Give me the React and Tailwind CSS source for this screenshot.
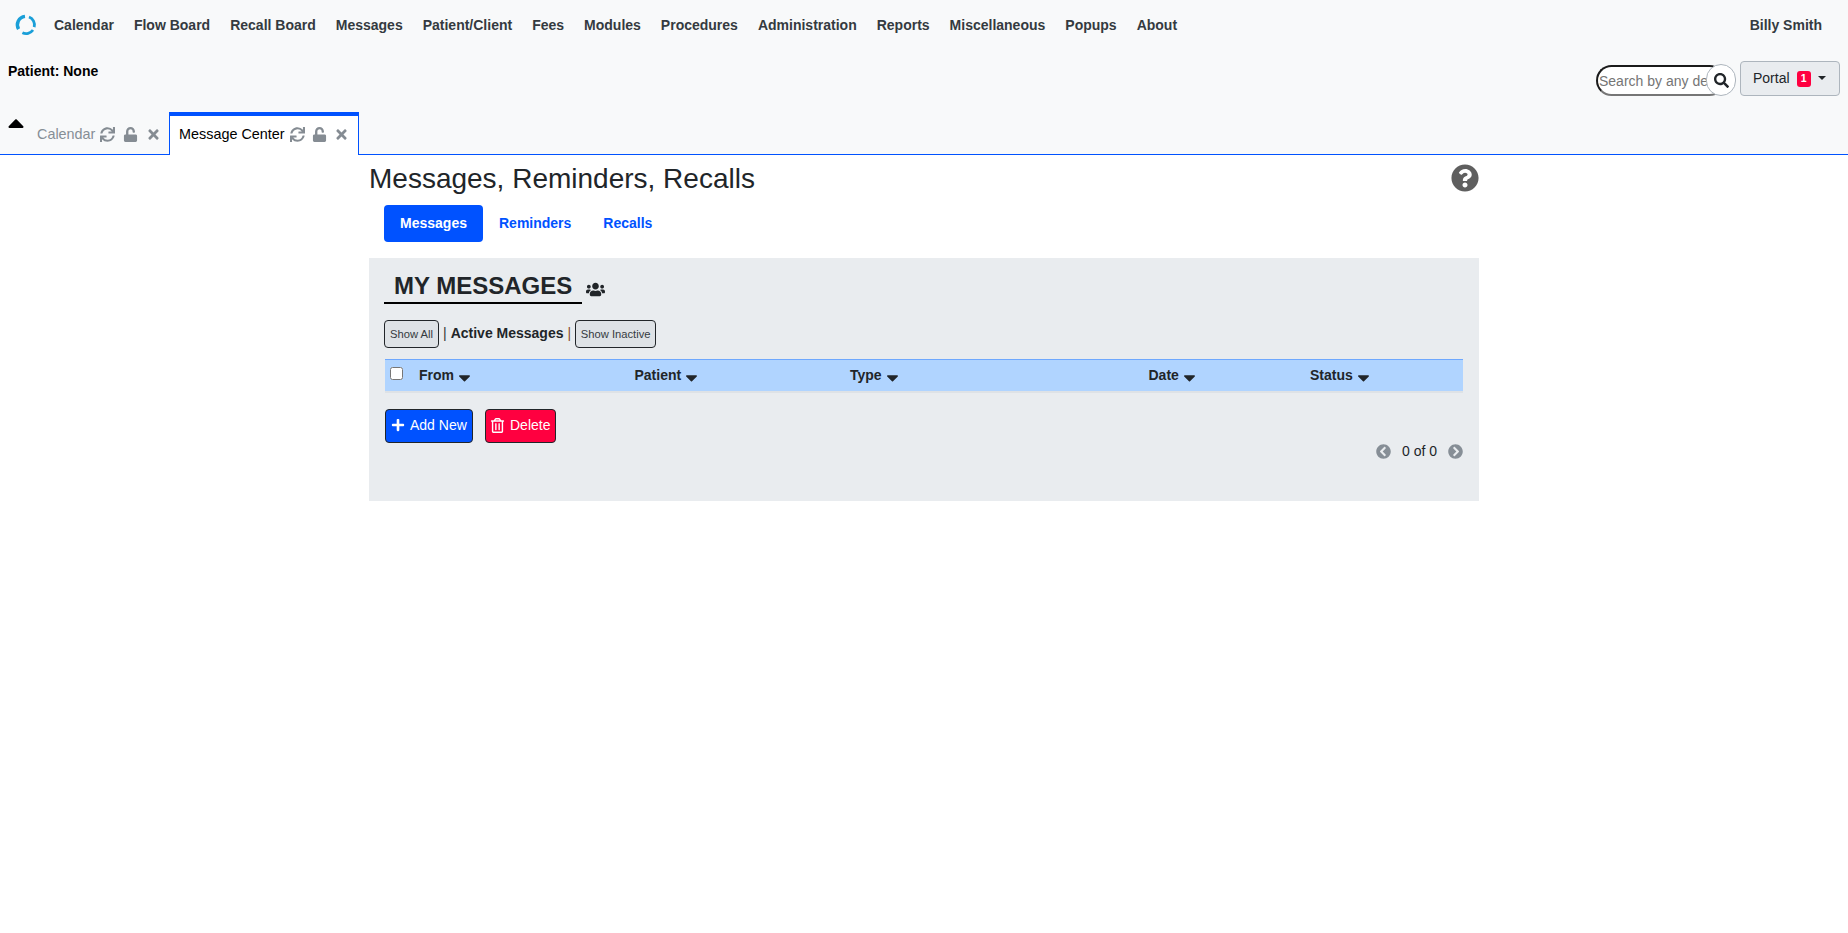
import { FaSync, FaUnlock, FaTimes, FaQuestionCircle, FaUsers, FaSearch, FaPlus, FaCaretDown, FaCaretUp, FaChevronCircleLeft, FaChevronCircleRight, FaRegTrashAlt } from 'react-icons/fa'

const menu = ['Calendar', 'Flow Board', 'Recall Board', 'Messages', 'Patient/Client', 'Fees', 'Modules', 'Procedures', 'Administration', 'Reports', 'Miscellaneous', 'Popups', 'About']

const columns = [
  { label: 'From', width: 'w-[215.5px]' },
  { label: 'Patient', width: 'w-[215.5px]' },
  { label: 'Type', width: 'w-[298.5px]' },
  { label: 'Date', width: 'w-[161.5px]' },
  { label: 'Status', width: 'w-[140px]' },
]

function Logo() {
  return (
    <svg width="24" height="24" viewBox="0 0 24 24" fill="none" stroke="#1a9fd8" className="shrink-0">
      <path d="M11 3.4 A8.5 8.5 0 0 0 4.6 16.2" strokeWidth="3.4" />
      <path d="M15 4 A8.5 8.5 0 0 1 20.2 14.2" strokeWidth="2.8" />
      <path d="M19 17 A8.5 8.5 0 0 1 8.4 19.7" strokeWidth="2.8" />
    </svg>
  )
}

function TabIcons({ tight }) {
  return (
    <span className={`flex items-center text-[#858c93] text-[15px] ${tight ? 'gap-[7px]' : 'gap-[8px]'}`}>
      <FaSync />
      <FaUnlock />
      <FaTimes />
    </span>
  )
}

export default function App() {
  return (
    <div className="min-h-[933px] bg-white font-['Liberation_Sans',Arial,sans-serif] text-[#212529]">
      <header className="h-[155px] bg-[#f8f9fa] border-b border-[#0052ff] flex flex-col relative">
        <nav className="h-[50px] flex items-center pl-[14px] pr-[26px]">
          <Logo />
          <ul className="flex items-center gap-[20px] ml-[16px] text-[14px] font-bold text-[#343a40]">
            {menu.map((m) => (
              <li key={m}>{m}</li>
            ))}
          </ul>
          <span className="ml-auto text-[14px] font-bold text-[#343a40]">Billy Smith</span>
        </nav>

        <div className="h-[62px] flex items-start justify-between pl-[8px] pr-[8px]">
          <span className="mt-[11px] text-[14px] leading-[20px] font-bold text-black">Patient: None</span>
          <div className="flex items-start gap-[4px] mt-[11px]">
            <div className="relative w-[140px] h-[32px] mt-[3px] flex items-end">
              <div className="w-[129px] h-[31px] bg-white rounded-full border-2 border-t-[#1b1b1b] border-l-[#1b1b1b] border-r-[#767676] border-b-[#767676] overflow-hidden flex items-center pl-[1px] pt-[1px] text-[14px] text-[#757575] whitespace-nowrap">
                Search by any demographics
              </div>
              <span className="absolute right-0 top-0 w-[30px] h-[32px] rounded-full bg-white border border-[#adb5bd] flex items-center justify-center text-[15px] text-[#212529]">
                <FaSearch />
              </span>
            </div>
            <button className="h-[35px] w-[100px] bg-[#e9ecef] border border-[#adb5bd] rounded-[4px] text-[14px] text-[#212529] flex items-center pl-[12px]">
              Portal
              <span className="ml-[7px] w-[14px] h-[16px] rounded-[3px] bg-[#ff0040] text-white text-[10.5px] font-bold flex items-center justify-center">1</span>
              <span className="ml-[7px] border-t-[4.5px] border-t-[#212529] border-x-[4.5px] border-x-transparent mb-[2px]"></span>
            </button>
          </div>
        </div>

        <div className="flex items-end h-[43px] -mb-px">
          <span className="w-[29px] pl-[3px] self-start -mt-[2px] text-black text-[26px]"><FaCaretUp /></span>
          <div className="h-[43px] w-[140px] pl-[8px] pt-[2px] flex items-center gap-[5px] text-[14.4px] text-[#868e96]">
            Calendar
            <TabIcons />
          </div>
          <div className="h-[43px] w-[190px] bg-white border-x border-b-0 border-[#0052ff] border-t-4 border-t-[#0052ff] pl-[9px] pb-[2px] flex items-center gap-[5px] text-[14.4px] text-black">
            Message Center
            <TabIcons tight />
          </div>
        </div>
      </header>

      <main className="w-[1110px] ml-[369px]">
        <div className="flex items-center justify-between h-[42px] mt-[3px]">
          <h1 className="text-[28px] leading-[42px] font-normal">Messages, Reminders, Recalls</h1>
          <FaQuestionCircle className="text-[28px] text-[#5f5f5f] -mt-[3px]" />
        </div>

        <div className="flex items-center h-[37px] ml-[15px] mt-[5px] text-[14px] font-bold text-[#0052ff]">
          <span className="h-[37px] w-[99px] rounded-[4px] bg-[#0052ff] text-white flex items-center justify-center">Messages</span>
          <span className="ml-[16px]">Reminders</span>
          <span className="ml-[32px]">Recalls</span>
        </div>

        <section className="h-[243px] mt-[16px] bg-[#e9ecef] px-[15px] pt-[14px]">
          <div className="flex items-center">
            <h2 className="w-[198px] h-[32px] pl-[10px] border-b-2 border-black text-[24px] leading-[28px] font-bold">MY MESSAGES</h2>
            <FaUsers className="ml-[4px] mt-[3px] text-[19px] text-[#212529]" />
          </div>

          <div className="flex items-center h-[28px] mt-[16px] text-[14px]">
            <button className="w-[55px] h-[28px] rounded-[4px] border border-[#212529] bg-[#dee2e6] text-[11.2px] text-[#343a40]">Show All</button>
            <span className="ml-[4px] -mt-px text-[#333]">|</span>
            <span className="ml-[4px] -mt-px font-bold">Active Messages</span>
            <span className="ml-[4px] -mt-px text-[#8a4b2a]">|</span>
            <button className="ml-[4px] w-[81px] h-[28px] rounded-[4px] border border-[#212529] bg-[#dee2e6] text-[11.2px] text-[#343a40]">Show Inactive</button>
          </div>

          <div className="flex items-center h-[34px] mt-[11px] ml-[1px] w-[1078px] bg-[#b0d4ff] border-t border-t-[#6ea8fe] border-b-2 border-b-[#dee2e6] text-[14px] font-bold relative">
            <input type="checkbox" className="absolute left-[5px] top-[7px] w-[13px] h-[13px]" />
            <div className="flex pl-[34px]">
              {columns.map((c) => (
                <span key={c.label} className={`${c.width} flex items-center gap-[1px]`}>
                  {c.label}
                  <FaCaretDown className="text-[19px] mt-[3px]" />
                </span>
              ))}
            </div>
          </div>

          <div className="flex items-center mt-[16px] ml-[1px] gap-[12px] text-[14px] text-white">
            <button className="w-[88px] h-[34px] rounded-[4px] border border-[#212529] bg-[#0052ff] flex items-center pl-[5px] pb-[2px] gap-[5px]">
              <FaPlus className="text-[14px]" />
              Add New
            </button>
            <button className="w-[71px] h-[34px] rounded-[4px] border border-[#212529] bg-[#ff0040] flex items-center pl-[4px] pb-[2px] gap-[5px]">
              <FaRegTrashAlt className="text-[15px]" />
              Delete
            </button>
          </div>

          <div className="flex items-center justify-end -mt-px h-[18px] w-[1079px] text-[14px]">
            <FaChevronCircleLeft className="text-[#868e96] text-[15px]" />
            <span className="mx-[11px]">0 of 0</span>
            <FaChevronCircleRight className="text-[#868e96] text-[15px]" />
          </div>
        </section>
      </main>
    </div>
  )
}
